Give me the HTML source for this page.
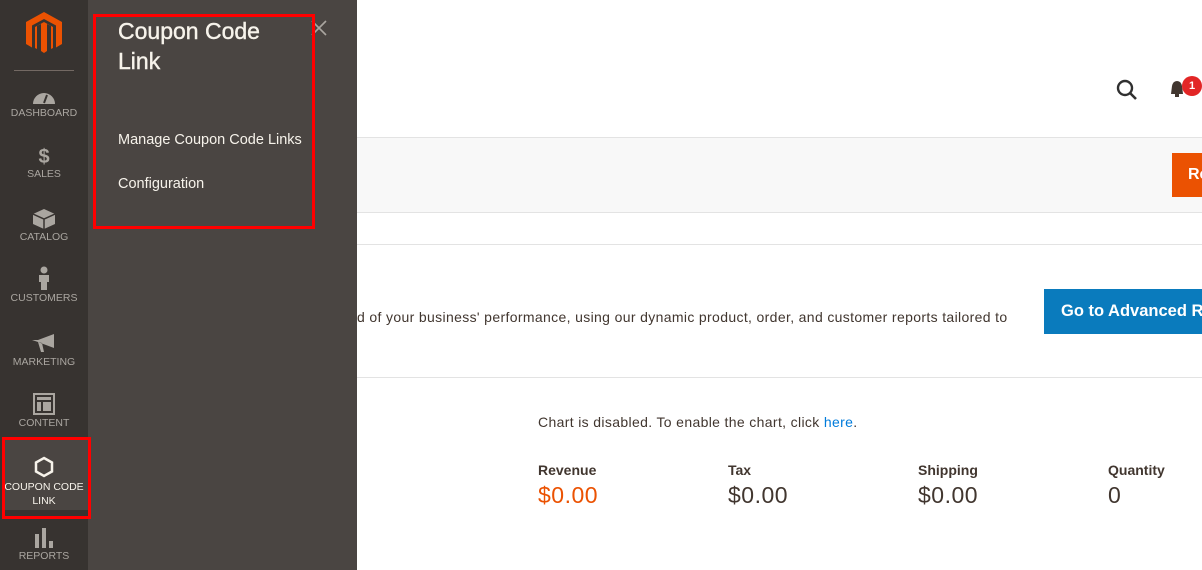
<!DOCTYPE html>
<html><head><style>
*{margin:0;padding:0;box-sizing:border-box}
body{width:1202px;height:570px;overflow:hidden;position:relative;font-family:"Liberation Sans",sans-serif;background:#fff}
.abs{position:absolute}
#side{left:0;top:0;width:88px;height:570px;background:#373330;z-index:5}
#fly{left:88px;top:0;width:269px;height:570px;background:#4a4542;z-index:4}
.nav{position:absolute;left:0;width:88px;text-align:center;color:#aaa6a0;font-size:10.5px}
.nav svg{display:block;margin:0 auto 2px}
.t{color:#41362f;font-size:14px;letter-spacing:0.35px}
</style></head><body>
<div class="abs" style="left:357px;top:137px;width:845px;height:76px;background:#f8f8f8;border-top:1px solid #e3e3e3;border-bottom:1px solid #e3e3e3"></div>
<div class="abs" style="left:357px;top:244px;width:845px;height:1px;background:#e3e3e3"></div>
<div class="abs" style="left:357px;top:377px;width:845px;height:1px;background:#e3e3e3"></div>
<div class="abs" style="left:1172px;top:153px;width:40px;height:44px;background:#eb5202;color:#fff;font-size:16px;font-weight:bold;padding:13px 0 0 16px">Re</div>
<div class="abs" style="left:1044px;top:289px;width:170px;height:45px;background:#0a7bbd;color:#fff;font-size:16.5px;font-weight:bold;padding:13px 0 0 17px;white-space:nowrap">Go to Advanced Reports</div>
<svg class="abs" style="left:1115px;top:78px" width="24" height="24" viewBox="0 0 24 24"><circle cx="10" cy="10" r="7" fill="none" stroke="#303030" stroke-width="2.4"/><line x1="15" y1="15" x2="21" y2="21" stroke="#303030" stroke-width="2.6"/></svg>
<svg class="abs" style="left:1168px;top:78px" width="20" height="22" viewBox="0 0 20 22"><path d="M3 16 L4 8 Q5 3 9 3 Q13 3 14 8 L15 16 Z" fill="#41362f"/><rect x="7" y="16" width="4" height="3" fill="#41362f"/></svg>
<div class="abs" style="left:1182px;top:76px;width:20px;height:20px;border-radius:50%;background:#e22626;color:#fff;font-size:11px;font-weight:bold;text-align:center;line-height:20px">1</div>
<div class="abs t" style="left:357px;top:309px;white-space:nowrap">d of your business' performance, using our dynamic product, order, and customer reports tailored to</div>
<div class="abs t" style="left:538px;top:414px">Chart is disabled. To enable the chart, click <span style="color:#007bdb">here</span>.</div>
<div class="abs" style="left:538px;top:462px;font-size:14px;font-weight:bold;color:#41362f">Revenue</div>
<div class="abs" style="left:728px;top:462px;font-size:14px;font-weight:bold;color:#41362f">Tax</div>
<div class="abs" style="left:918px;top:462px;font-size:14px;font-weight:bold;color:#41362f">Shipping</div>
<div class="abs" style="left:1108px;top:462px;font-size:14px;font-weight:bold;color:#41362f">Quantity</div>
<div class="abs" style="left:538px;top:482px;font-size:23px;color:#eb5202;letter-spacing:0.5px">$0.00</div>
<div class="abs" style="left:728px;top:482px;font-size:23px;color:#41362f;letter-spacing:0.5px">$0.00</div>
<div class="abs" style="left:918px;top:482px;font-size:23px;color:#41362f;letter-spacing:0.5px">$0.00</div>
<div class="abs" style="left:1108px;top:482px;font-size:23px;color:#41362f">0</div>

<div id="side" class="abs">
<svg class="abs" style="left:26px;top:12px" width="36" height="42" viewBox="0 0 36 42"><path d="M18 0 L36 10 V32 L30 35.5 V13.5 L18 7 L6 13.5 V35.5 L0 32 V10 Z" fill="#eb5202"/><path d="M15 12 V39 L18 41 L21 39 V12 L25 14 V37 L27 36 V15 L18 10 L9 15 V36 L11 37 V14 Z" fill="#eb5202"/></svg>
<div class="abs" style="left:14px;top:70px;width:60px;height:1px;background:#736963"></div>
<div class="nav" style="top:87px"><svg width="24" height="18" viewBox="0 0 24 18"><path d="M1 17 A11 11 0 0 1 23 17 Z" fill="#aaa6a0"/><line x1="12" y1="16" x2="15" y2="8" stroke="#373330" stroke-width="2"/></svg>DASHBOARD</div>
<div class="nav" style="top:146px"><div style="font-size:20px;font-weight:bold;line-height:22px">$</div>SALES</div>
<div class="nav" style="top:209px"><svg width="22" height="20" viewBox="0 0 22 20"><path d="M11 0 L22 5 V15 L11 20 L0 15 V5 Z" fill="#aaa6a0"/><path d="M0 5 L11 10 L22 5 M11 10 V20" stroke="#373330" stroke-width="1.5" fill="none"/></svg>CATALOG</div>
<div class="nav" style="top:266px"><svg width="14" height="24" viewBox="0 0 14 24"><circle cx="7" cy="4" r="3.5" fill="#aaa6a0"/><path d="M2 9 H12 V16 H10 V24 H4 V16 H2 Z" fill="#aaa6a0"/></svg>CUSTOMERS</div>
<div class="nav" style="top:334px"><svg width="24" height="20" viewBox="0 0 24 20"><path d="M0 6 H6 L22 0 V14 L6 8 Z M6 8 L9 18 H12 L10 9Z" fill="#aaa6a0"/></svg>MARKETING</div>
<div class="nav" style="top:393px"><svg width="22" height="22" viewBox="0 0 22 22"><rect x="1" y="1" width="20" height="20" fill="none" stroke="#aaa6a0" stroke-width="2"/><rect x="4" y="4" width="14" height="3" fill="#aaa6a0"/><rect x="4" y="9" width="4" height="9" fill="#aaa6a0"/><rect x="10" y="9" width="8" height="9" fill="#aaa6a0"/></svg>CONTENT</div>
<div class="abs" style="left:4px;top:440px;width:84px;height:70px;background:#4a4542"></div>
<div class="nav" style="top:456px;color:#f7f3eb;line-height:14px"><svg width="20" height="22" viewBox="0 0 20 22"><path d="M10 2 L18 6.5 V15.5 L10 20 L2 15.5 V6.5 Z" fill="none" stroke="#f7f3eb" stroke-width="2.5"/></svg>COUPON CODE<br>LINK</div>
<div class="abs" style="left:2px;top:437px;width:89px;height:82px;border:3px solid #f00"></div>
<div class="nav" style="top:526px"><svg width="22" height="22" viewBox="0 0 22 22"><rect x="2" y="8" width="4" height="14" fill="#aaa6a0"/><rect x="9" y="2" width="4" height="20" fill="#aaa6a0"/><rect x="16" y="15" width="4" height="7" fill="#aaa6a0"/></svg>REPORTS</div>
</div>

<div id="fly" class="abs">
<div class="abs" style="left:30px;top:16px;color:#f7f3eb;font-size:23px;line-height:30px;-webkit-text-stroke:0.4px #f7f3eb">Coupon Code<br>Link</div>
<div class="abs" style="left:30px;top:132px;color:#f7f3eb;font-size:14.5px">Manage Coupon Code Links</div>
<div class="abs" style="left:30px;top:176px;color:#f7f3eb;font-size:14.5px">Configuration</div>
<svg class="abs" style="left:223px;top:20px" width="16" height="16" viewBox="0 0 16 16"><path d="M1 1 L15 15 M15 1 L1 15" stroke="#aaa6a0" stroke-width="1.6"/></svg>
<div class="abs" style="left:5px;top:14px;width:222px;height:215px;border:3px solid #f00"></div>
</div>
</body></html>
